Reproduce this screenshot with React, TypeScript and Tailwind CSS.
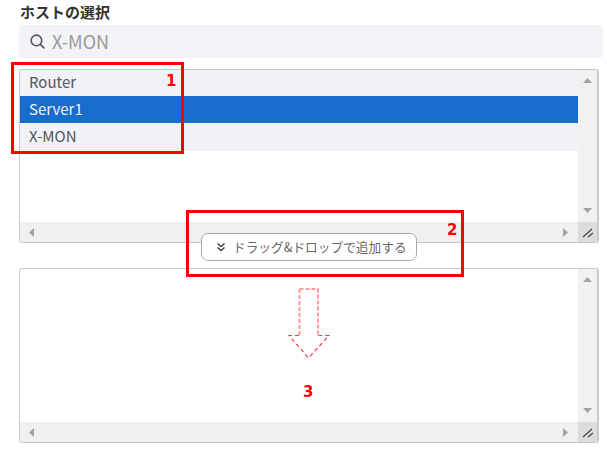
import React from "react";

const font = { fontFamily: '"Noto Sans CJK JP", "Noto Sans", sans-serif' };

function Tri({ dir }: { dir: "up" | "down" | "left" | "right" }) {
  const pts = {
    up: "0,8 4.5,3 9,8",
    down: "0,2 9,2 4.5,7",
    left: "7,1 7,10 2,5.5",
    right: "2,1 2,10 7,5.5",
  }[dir];
  return (
    <svg width="9" height="11" viewBox="0 0 9 11" className="block">
      <polygon points={pts} fill="#a3a3a3" />
    </svg>
  );
}

function ListBox({ children, h }: { children?: React.ReactNode; h: string }) {
  return (
    <div className={`flex flex-col ${h} w-[580px] overflow-hidden rounded-[3px] border border-[#c8c9cc] border-r-2 bg-white`}>
      <div className="flex min-h-0 flex-1">
        <div className="min-w-0 flex-1">{children}</div>
        <div className="flex w-[19px] flex-col items-center justify-between bg-[#f1f1f1] py-[5px]">
          <Tri dir="up" />
          <Tri dir="down" />
        </div>
      </div>
      <div className="flex h-[20px] shrink-0 items-center bg-[#f0f0f0]">
        <div className="flex flex-1 items-center justify-between pl-[7px] pr-[8px]">
          <Tri dir="left" />
          <Tri dir="right" />
        </div>
        <div className="flex h-full w-[19px] items-center justify-center bg-[#dcdcdc]">
          <svg width="12" height="12" viewBox="0 0 12 12">
            <path d="M1 11 L10 3 M6 11 L11 7" stroke="#444" strokeWidth="1.2" fill="none" />
          </svg>
        </div>
      </div>
    </div>
  );
}

function Row({ text, selected, h }: { text: string; selected?: boolean; h: string }) {
  return (
    <div
      className={`flex ${h} items-center pb-px pl-[9px] text-[15px] ${selected ? "bg-[#196bcc] text-[#eef3fa]" : "bg-[#f1f2f7] text-[#555555]"}`}
    >
      {text}
    </div>
  );
}

export default function App() {
  return (
    <div className="relative h-[455px] w-[607px] overflow-hidden bg-white" style={font}>
      <div className="flex flex-col pl-[19px] pt-[2px]">
        <div className="h-[23px] pl-px text-[15px] font-bold leading-[20px] text-[#333333]">ホストの選択</div>
        <div className="flex h-[33px] w-[584px] items-center gap-[6px] rounded-[4px] bg-[#f2f3f7] pl-[10px]">
          <svg width="17" height="17" viewBox="0 0 24 24" fill="none" stroke="#555" strokeWidth="2.2" strokeLinecap="round">
            <circle cx="10.5" cy="10.5" r="7.5" />
            <path d="M16 16 L21 21" />
          </svg>
          <span className="text-[18px] text-[#9a9a9a]">X-MON</span>
        </div>
        <div className="mt-[11px]">
          <ListBox h="h-[174px]">
            <div>
              <Row text="Router" h="h-[26px]" />
              <Row text="Server1" selected h="h-[27px]" />
              <Row text="X-MON" h="h-[28px]" />
            </div>
          </ListBox>
        </div>
        <div className="mt-[25px]">
          <ListBox h="h-[175px]" />
        </div>
      </div>

      {/* Drag handle */}
      <div className="absolute left-[201px] top-[233px] flex h-[28px] w-[216px] items-center rounded-[7px] border border-[#a9a9a9] bg-white pl-[14px] text-[12.7px] text-[#666666]">
        <svg width="10" height="10" viewBox="0 0 10 10" fill="none" stroke="#444" strokeWidth="1.6" className="mr-[7px]">
          <path d="M1.5 1.5 L5 4.5 L8.5 1.5 M1.5 5.5 L5 8.5 L8.5 5.5" />
        </svg>
        ドラッグ&amp;ドロップで追加する
      </div>

      {/* Annotations */}
      <div className="absolute left-[11px] top-[62px] h-[92px] w-[173px] border-[3px] border-[#ff0000]" />
      <div className="absolute left-[186px] top-[210px] h-[67px] w-[278px] border-[3px] border-[#ff0000]" />
      <span className="absolute left-[166px] top-[71px] text-[15px] font-bold leading-[20px] text-[#ff0000]" style={{ fontFamily: '"DejaVu Sans", sans-serif' }}>1</span>
      <span className="absolute left-[447px] top-[220px] text-[15px] font-bold leading-[20px] text-[#ff0000]" style={{ fontFamily: '"DejaVu Sans", sans-serif' }}>2</span>
      <span className="absolute left-[303px] top-[382px] text-[15px] font-bold leading-[20px] text-[#ff0000]" style={{ fontFamily: '"DejaVu Sans", sans-serif' }}>3</span>
      <svg className="absolute left-[285px] top-[285px]" width="48" height="76" viewBox="0 0 48 76" fill="none">
        <path d="M14.5 4 H33 V50" stroke="#ff9a9a" strokeWidth="2" strokeDasharray="4 2" />
        <path d="M14.5 4 V50" stroke="#ff9a9a" strokeWidth="2" strokeDasharray="4 2" />
        <path d="M14 50.5 H4 L23.5 73 L44 50.5 H33" stroke="#ff3a3a" strokeWidth="1.2" strokeDasharray="4 3" />
      </svg>
    </div>
  );
}
